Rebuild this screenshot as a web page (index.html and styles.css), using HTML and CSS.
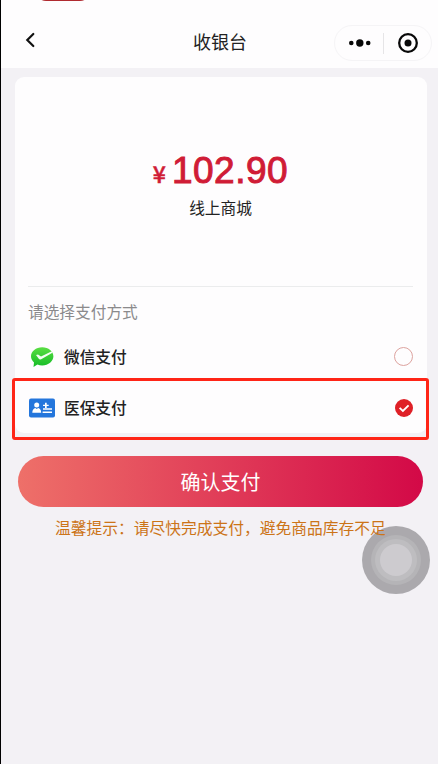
FILE: index.html
```html
<!DOCTYPE html>
<html lang="zh-CN">
<head>
<meta charset="UTF-8">
<title>收银台</title>
<link rel="stylesheet" href="styles.css">
</head>
<body>
<div class="app">
  <div class="status-pill"></div>
  <header class="navbar">
    <svg class="back" viewBox="0 0 10 16"><path d="M8.300 2 2.300 8l6 6" fill="none" stroke="#111" stroke-width="2.200" stroke-linecap="round" stroke-linejoin="miter"/></svg>
    <h1 class="title">收银台</h1>
    <div class="capsule">
      <svg class="dots" viewBox="0 0 22 8"><circle cx="2.300" cy="4" r="2.300"/><circle cx="10.800" cy="4" r="3.700"/><circle cx="19.200" cy="4" r="2.300"/></svg>
      <span class="capsule-line"></span>
      <svg class="target" viewBox="0 0 20 20"><circle cx="10" cy="10" r="8.800" fill="none" stroke="#080808" stroke-width="2.300"/><circle cx="10" cy="10" r="3.500"/></svg>
    </div>
  </header>
  <main class="content">
    <section class="card">
      <div class="summary">
        <div class="amount"><span class="currency">¥</span><span class="value">102.90</span></div>
        <div class="shop">线上商城</div>
      </div>
      <div class="methods">
        <h2 class="methods-title">请选择支付方式</h2>
        <div class="method">
          <svg class="logo" viewBox="0 0 26 22">
            <defs><linearGradient id="green" x1="0" y1="0" x2="0" y2="1"><stop offset="0" stop-color="#5ade43"/><stop offset="1" stop-color="#14bb26"/></linearGradient></defs>
            <path d="M13.200 1.200c6.300 0 11.200 4 11.200 9.100s-4.900 9.100-11.200 9.100c-1.700 0-3.300-.3-4.800-.9l-3.900 2.600.5-4.600C3 14.800 2 12.700 2 10.300c0-5.100 4.900-9.100 11.200-9.100z" fill="url(#green)"/>
            <path d="M7 8.900 9 8.400l3 2.200 10.800-5.300.6 1.500-11.600 6.600-1.600-.2z" fill="#f4fff2"/>
          </svg>
          <span class="name">微信支付</span>
          <span class="radio"></span>
        </div>
        <div class="method selected">
          <svg class="logo" viewBox="0 0 26 22">
            <rect x="0" y="1.400" width="26" height="19.200" rx="2" fill="#2476dc"/>
            <g fill="#fff"><circle cx="7.700" cy="8" r="2.500"/><path d="M3.300 15.700c0-3 1.500-4.500 3-4.800l1.400 1 1.500-1c1.600.3 3 1.800 3 4.800z"/><path d="M16 5.700h1.700v2h2v1.400h-2v2H16v-2h-2V7.700h2zM14 11.300h9v1.500h-9zM13.600 14.400H23v1.500h-9.400z"/></g>
          </svg>
          <span class="name">医保支付</span>
          <svg class="checked" viewBox="0 0 18 18"><circle cx="9" cy="9" r="9" fill="#df2027"/><path d="m4.600 8.900 3.300 3 5.700-5.500" fill="none" stroke="#fff" stroke-width="1.900"/></svg>
          <span class="highlight"></span>
        </div>
      </div>
    </section>
    <button class="confirm">确认支付</button>
    <p class="tip">温馨提示：请尽快完成支付，避免商品库存不足<span class="assist"><i class="ring"><i class="ring-inner"><i class="core"></i></i></i></span></p>
  </main>
</div>
</body>
</html>
```

FILE: styles.css
```css
* { box-sizing: border-box; }

body {
  margin: 0;
  font-family: "Noto Sans CJK SC", sans-serif;
  color: #222;
  background: #f3f1f5;
}

.app {
  position: relative;
  height: 764px;
  overflow: hidden;
  border-left: 1px solid #000;
}

.status-pill {
  position: absolute;
  top: -19px;
  left: 35px;
  width: 54px;
  height: 20px;
  border-radius: 10px;
  background: #b02a30;
}

.navbar {
  display: grid;
  grid-template-columns: 1fr auto 1fr;
  align-items: center;
  height: 68px;
  padding: 18px 6px 0 24px;
  background: #fefdfe;
}

.back {
  width: 10px;
  height: 16px;
  margin-top: -6px;
}

.title {
  margin: -4px 0 0 -17px;
  font-size: 18px;
  line-height: 26px;
  font-weight: 400;
}

.capsule {
  display: flex;
  align-items: center;
  justify-self: end;
  width: 98px;
  height: 36px;
  padding-left: 14px;
  border: 1px solid #f5f4f6;
  border-radius: 18px;
}

.dots { width: 22px; height: 8px; fill: #080808; }

.capsule-line {
  width: 1px;
  height: 21px;
  margin: 0 14px 0 12px;
  background: #e6e5e7;
}

.target { width: 20px; height: 20px; fill: #080808; }

.content { padding: 9px 11px 0 14px; }

.card {
  height: 356px;
  padding: 0 14px 0 13px;
  border-radius: 9px;
  background: #fefdfe;
}

.summary {
  height: 210px;
  padding-top: 70px;
  border-bottom: 1px solid #ebeced;
  text-align: center;
}

.amount {
  display: flex;
  align-items: baseline;
  justify-content: center;
  height: 49px;
  line-height: 47px;
  color: #d01c36;
}

.currency {
  margin-right: 6px;
  font-size: 23px;
  font-weight: 500;
  -webkit-text-stroke: 0.5px #d01c36;
}

.value {
  font-family: "Liberation Sans", sans-serif;
  font-size: 37px;
  letter-spacing: 0.5px;
  -webkit-text-stroke: 1px #d01c36;
}

.shop {
  font-size: 15.700px;
  line-height: 24px;
}

.methods-title {
  margin: 14px 0 8px;
  font-size: 15.700px;
  line-height: 22px;
  font-weight: 400;
  color: #8b8a8c;
}

.method {
  position: relative;
  display: flex;
  align-items: center;
  height: 51px;
}

.logo { width: 26px; height: 22px; margin: 0 9px 0 1px; }

.name { flex: 1; font-size: 15.700px; font-weight: 500; }

.radio {
  width: 19px;
  height: 19px;
  border: 1px solid #dda39f;
  border-radius: 50%;
}

.checked { width: 18px; height: 18px; }

.highlight {
  position: absolute;
  top: -4px;
  left: -16px;
  right: -16px;
  height: 62px;
  border: 3px solid #ff2517;
  border-radius: 3px;
}

.confirm {
  display: block;
  width: 405px;
  height: 51px;
  margin: 23px 0 0 3px;
  padding: 0;
  border: 0;
  border-radius: 26px;
  color: #fff;
  background: linear-gradient(90deg, #ee7069, #d30947);
  font: 400 20px "Noto Sans CJK SC", sans-serif;
}

.tip {
  position: relative;
  z-index: 0;
  margin: 9px 0 0;
  padding-left: 40px;
  font-size: 15.750px;
  line-height: 24px;
  white-space: nowrap;
  color: #cc7418;
}

.assist {
  position: absolute;
  z-index: -1;
  top: 10px;
  left: 347px;
  display: grid;
  place-items: center;
  width: 68px;
  height: 68px;
  border-radius: 50%;
  background: #aba9ad;
}

.ring, .ring-inner, .core {
  display: grid;
  place-items: center;
  border-radius: 50%;
}

.ring { width: 50px; height: 50px; background: #b5b4b7; }
.ring-inner { width: 42px; height: 42px; background: #bebdc0; }
.core { width: 32px; height: 32px; background: #cdcbcf; }
```
